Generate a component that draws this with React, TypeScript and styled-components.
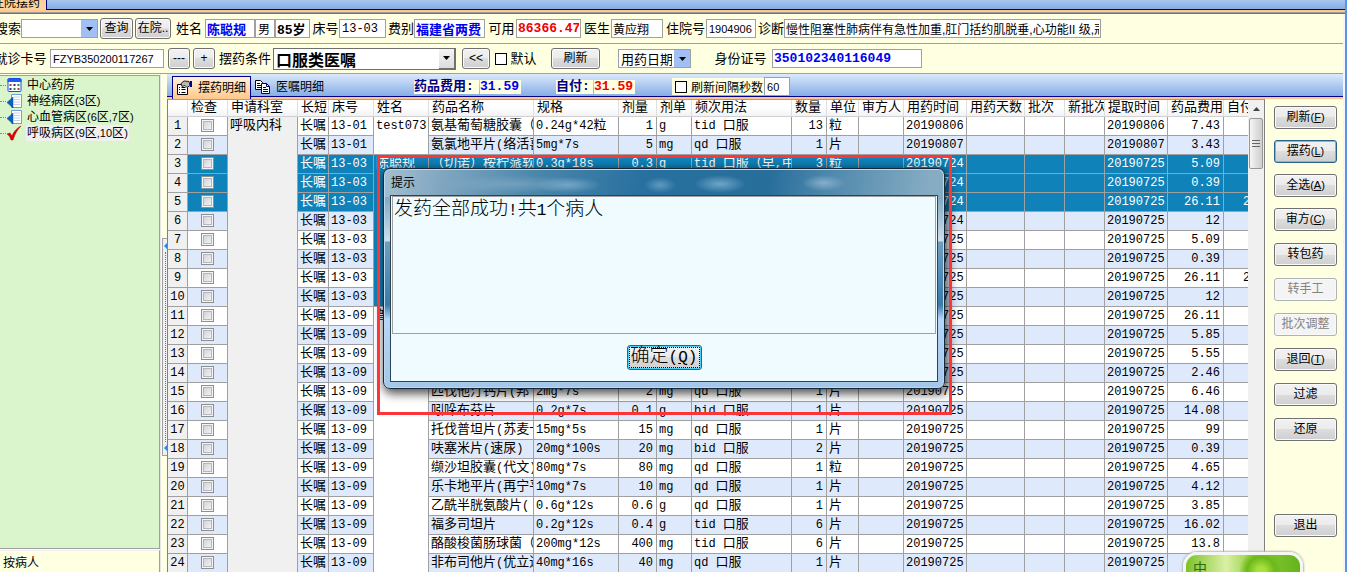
import React from "react";
import styled, { createGlobalStyle, css } from "styled-components";

const CJK = `"Noto Sans CJK SC", sans-serif`;
const MONO = `"Liberation Mono", ${CJK}`;
const UI = `"Liberation Sans", ${CJK}`;
const LINE = "#a0a0a0";
const CREAM = "#ffffe1";

const Global = createGlobalStyle`
  * { box-sizing: border-box; }
  body { margin: 0; overflow: hidden; font: 12px ${UI}; color: #000; }
  button, input, select { font: inherit; color: inherit; margin: 0; padding: 0; border-radius: 0; }
`;

/* ---------- text: Han characters and Latin runs have their own sizes ---------- */
const Han = styled.span<{ $s: number }>`
  font-family: ${CJK};
  font-size: ${(p) => p.$s}px;
  line-height: 0;
`;
const Latin = styled.span<{ $s: number }>`
  font-size: ${(p) => p.$s}px;
  line-height: 0;
`;
function Runs({ text, han = 13, latin = 12 }: { text: string; han?: number; latin?: number }) {
  const parts = text.match(/[\u0000-\u00ff]+|[^\u0000-\u00ff]+/g) || [];
  return (
    <>
      {parts.map((p, i) =>
        p.charCodeAt(0) < 256 ? <Latin key={i} $s={latin}>{p}</Latin> : <Han key={i} $s={han}>{p}</Han>
      )}
    </>
  );
}

/* ---------- frame ---------- */
const Window = styled.div`
  display: flex;
  flex-direction: column;
  height: 100vh;
  overflow: hidden;
  background: ${CREAM};
  border-right: 2px solid #5a92e6;
  position: relative;
`;
const TabStrip = styled.div`
  flex: none;
  display: flex;
  height: 14px;
  background: linear-gradient(#a8c6f0, #86ade6);
  background-size: 100% 9px;
  background-repeat: no-repeat;
  position: relative;
  border-bottom: 1px solid #707070;
  &::after {
    content: "";
    position: absolute;
    inset: 9px 0 0 0;
    border-top: 1px solid #00008b;
    background: linear-gradient(#ffc88a 2px, #a0a0a0 2px);
  }
`;
const PageTab = styled.button`
  width: 47px;
  height: 10px;
  overflow: hidden;
  border: 0;
  border-right: 1px solid #00008b;
  background: #ffd39c;
  display: flex;
  align-items: flex-end;
  justify-content: flex-end;
  padding-right: 6px;
  line-height: 14px;
  white-space: nowrap;
  z-index: 1;
`;
const Body = styled.div`
  flex: 1;
  min-height: 0;
  display: flex;
  flex-direction: column;
  border-right: 2px solid #f4f4fa;
`;
const Bar = styled.div`
  flex: none;
  height: 30px;
  display: flex;
  align-items: center;
  gap: 2px;
  white-space: nowrap;
  overflow: hidden;
  border-bottom: 1px solid ${LINE};
`;
const Group = styled.div<{ $lead?: number }>`
  display: flex;
  align-items: center;
  flex: none;
  margin-left: ${(p) => p.$lead || 0}px;
`;
const Label = styled.label<{ $w: number; $end?: boolean }>`
  width: ${(p) => p.$w}px;
  flex: none;
  display: flex;
  justify-content: ${(p) => (p.$end ? "flex-end" : "center")};
  overflow: hidden;
  font-size: 13px;
  line-height: 20px;
`;
const Box = styled.input<{ $w: number; $tone?: string; $bold?: boolean; $small?: boolean; $han?: boolean }>`
  width: ${(p) => p.$w}px;
  height: 19px;
  flex: none;
  border: 1px solid ${LINE};
  background: #fff;
  padding: 0 2px;
  color: ${(p) => p.$tone || "#000"};
  font: 12px/16px ${MONO};
  ${(p) => p.$bold && css`font-weight: 700; font-size: 13px; padding: 0 1px;`}
  ${(p) => p.$small && css`font: 11px/16px ${UI};`}
  ${(p) => p.$han && css`font: 12px/16px ${UI}; padding: 0 1px;`}
`;
const Btn = styled.button<{ $w?: number; $focus?: boolean }>`
  width: ${(p) => (p.$w ? `${p.$w}px` : "100%")};
  height: 21px;
  flex: none;
  border: 1px solid ${(p) => (p.$focus ? "#2c628b" : "#707070")};
  border-radius: 3px;
  background: linear-gradient(#f2f2f2, #ebebeb 50%, #dddddd 50%, #cfcfcf);
  box-shadow: inset 0 0 0 1px ${(p) => (p.$focus ? "#48d0f4" : "#fafafa")};
  line-height: 19px;
  white-space: nowrap;
  &:disabled {
    color: #838383;
    border-color: #adb2b5;
    background: #f4f4f4;
  }
`;
const Combo = styled.span<{ $w: number; $big?: boolean }>`
  width: ${(p) => p.$w}px;
  height: ${(p) => (p.$big ? 22 : 19)}px;
  flex: none;
  display: flex;
  border: 1px solid ${(p) => (p.$big ? "#707070" : LINE)};
  background: #fff;
  select {
    appearance: none;
    flex: 1;
    min-width: 0;
    border: 0;
    outline: 0;
    background: transparent;
    padding: 0 2px;
    font: ${(p) => (p.$big ? "700 16px/18px" : "13px/17px")} ${CJK};
  }
`;
const Drop = styled.span<{ $grey?: boolean }>`
  width: 16px;
  flex: none;
  display: grid;
  place-items: center;
  background: ${(p) => (p.$grey ? "linear-gradient(#f4f4f4, #dcdcdc)" : "#a0bff5")};
  ${(p) => p.$grey && css`border-right: 1px solid #707070; border-bottom: 1px solid #707070;`}
`;
const Tri = () => (
  <svg width="7" height="4" viewBox="0 0 7 4" aria-hidden="true">
    <path d="M0 0h7L3.500 4z" fill="#000" />
  </svg>
);
const Tick = styled.input`
  appearance: none;
  width: 12px;
  height: 12px;
  flex: none;
  border: 1px solid #000;
  background: #fff;
`;

/* ---------- left side ---------- */
const Work = styled.div`
  flex: 1;
  min-height: 0;
  display: flex;
`;
const Side = styled.aside`
  width: 161px;
  flex: none;
  display: flex;
  flex-direction: column;
  padding-top: 1px;
  border-right: 1px solid #e6e6e6;
`;
const Tree = styled.ul`
  flex: 1;
  margin: 0;
  padding: 1px 0 0;
  list-style: none;
  background: #daf5cc;
  border: 1px solid ${LINE};
  border-left: 0;
`;
const Node = styled.li<{ $on?: boolean }>`
  height: 16px;
  display: flex;
  align-items: center;
  line-height: 16px;
  white-space: nowrap;
  gap: 4px;
  &::before {
    content: "";
    width: 6px;
    margin-right: -3px;
    border-top: 1px dotted #888;
  }
  svg { flex: none; width: 15px; }
  span.name { padding: 0 1px; background: ${(p) => (p.$on ? "#f0f0f0" : "none")}; }
`;
const SideFoot = styled.div`
  height: 22px;
  flex: none;
  margin-top: 1px;
  border-top: 1px solid #f0f0f0;
  border-right: 1px solid ${LINE};
  padding-left: 3px;
  line-height: 25px;
`;
const Splitter = styled.div`
  width: 6px;
  flex: none;
  padding: 164px 0 0 1px;
`;
const Handle = styled.div`
  width: 5px;
  height: 218px;
  border: 1px solid ${LINE};
  border-right: 0;
  background: #f0f0f0;
  display: flex;
  flex-direction: column;
  align-items: center;
  justify-content: space-between;
  padding: 4px 0;
  &::before, &::after {
    content: "";
    border: 3px solid transparent;
    border-right-color: #1e8bef;
    border-left: 0;
  }
  i { flex: 1; margin: 3px 0; border-left: 1px dotted #1e8bef; }
`;

/* ---------- grid ---------- */
const Main = styled.main`
  flex: 1;
  min-width: 0;
  display: flex;
  flex-direction: column;
`;
const Strip = styled.div`
  flex: none;
  height: 25px;
  display: flex;
  align-items: center;
  background: linear-gradient(#dbe9fc, #86ade6 22px, #00008b 22px, #00008b 23px, #ffc88a 23px);
  white-space: nowrap;
`;
const SubTab = styled.button<{ $on?: boolean; $w: number }>`
  width: ${(p) => p.$w}px;
  height: 21px;
  flex: none;
  align-self: flex-end;
  display: flex;
  align-items: center;
  gap: 5px;
  border: 0;
  background: none;
  padding: 0 0 0 4px;
  margin: 0 0 2px;
  line-height: 22px;
  ${(p) =>
    p.$on &&
    css`
      border: 1px solid #00008b;
      border-bottom: 0;
      background: linear-gradient(#fff0dc, #ffc88a);
      margin: 0 0 0 5px;
      padding-left: 3px;
      height: 23px;
    `}
`;
const Sum = styled.span<{ $tone?: string; $w: number }>`
  width: ${(p) => p.$w}px;
  background: ${CREAM};
  color: ${(p) => p.$tone || "#00008b"};
  font: 700 13px/14px ${MONO};
  margin-right: 1px;
`;
const Refresh = styled.label`
  display: flex;
  align-items: center;
  gap: 4px;
  background: ${CREAM};
  height: 17px;
  padding: 0 1px 0 3px;
`;
const Content = styled.div`
  flex: 1;
  min-height: 0;
  display: flex;
`;
const GridWrap = styled.div`
  flex: 1;
  min-width: 0;
  display: flex;
  border: 1px solid #808080;
  border-top-color: ${LINE};
  border-bottom: 0;
  background: #f0f0f0;
`;
const Clip = styled.div`
  flex: 1;
  min-width: 0;
  overflow: hidden;
`;
const Grid = styled.table`
  table-layout: fixed;
  width: max(100%, 1115px);
  border-collapse: separate;
  border-spacing: 0;
  font: 12px/18px ${MONO};
  white-space: nowrap;
`;
const Th = styled.th`
  height: 17px;
  padding: 0 0 0 3px;
  overflow: hidden;
  text-align: left;
  font-weight: 400;
  line-height: 16px;
  border-right: 1px solid #e0e0e0;
  border-bottom: 1px solid #d0d0d0;
  background: linear-gradient(#fff 50%, #f2f2f4);
`;
const Td = styled.td<{ $align?: string; $fill?: string; $ink?: string }>`
  height: 19px;
  padding: 0 ${(p) => (p.$align === "right" ? 3 : 0)}px 0 ${(p) => (p.$align === "center" ? 0 : 2)}px;
  overflow: hidden;
  vertical-align: top;
  text-align: ${(p) => p.$align || "left"};
  border-right: 1px solid ${LINE};
  border-bottom: 1px solid ${LINE};
  background: ${(p) => p.$fill};
  color: ${(p) => p.$ink || "#000"};
`;
const CheckCell = styled.input`
  appearance: none;
  display: block;
  width: 13px;
  height: 13px;
  && { margin: 2px auto 0; }
  border: 1px solid #8e8f8f;
  background: linear-gradient(135deg, #c8ccd2, #fafafa);
  box-shadow: inset 0 0 0 1px #f4f4f4, inset 0 0 0 2px #b4b8be;
`;
const Scroll = styled.div`
  width: 16px;
  flex: none;
  display: flex;
  flex-direction: column;
  align-items: center;
  background: #f0f0f0;
  padding-top: 7px;
  gap: 7px;
`;
const Thumb = styled.div`
  width: 14px;
  height: 51px;
  border: 1px solid #979797;
  border-radius: 2px;
  background: linear-gradient(90deg, #f6f6f6, #e0e0e0 50%, #cfcfcf);
  display: grid;
  place-items: center;
`;
const Actions = styled.nav`
  width: 78px;
  flex: none;
  display: flex;
  flex-direction: column;
  gap: 12px;
  padding: 7px 6px 0 8px;
  border-left: 1px solid #fff;
  button { height: 23px; width: 63px; }
`;
const Tight = styled.div`
  display: flex;
  flex-direction: column;
  gap: 11px;
`;
const Exit = styled.div`
  margin-top: 61px;
`;

/* ---------- overlays ---------- */
const Mark = styled.div`
  position: absolute;
  left: 377px;
  top: 155px;
  width: 575px;
  height: 260px;
  border: 3px solid #fb3538;
  z-index: 3;
`;
const Dialog = styled.section`
  position: absolute;
  left: 383px;
  top: 168px;
  width: 562px;
  height: 221px;
  z-index: 2;
  display: flex;
  flex-direction: column;
  padding: 0 6px 6px;
  border: 1px solid #16293a;
  border-radius: 7px;
  box-shadow: inset 0 0 0 1px #bcd9ee, 2px 3px 10px 2px rgba(0, 0, 0, 0.65);
  background:
    radial-gradient(76px 9px at 130px 15px, #8db3cc80, transparent),
    radial-gradient(34px 8px at 184px 16px, #6fa3c4, transparent),
    radial-gradient(16px 8px at 276px 16px, #5f9abf, transparent),
    radial-gradient(26px 9px at 336px 15px, #6fa5c8, transparent),
    radial-gradient(22px 8px at 440px 14px, #86b0ca, transparent),
    linear-gradient(100deg, #a5bfd1 0, #7fa6c0 60px, #4b86ab 150px, #27709f 260px, #276e9b 380px, #4f88ac 440px, #86acc3 540px) 0 0 / 100% 28px no-repeat,
    linear-gradient(#7fa9c4 28px, #cfdeea 72px, #6f9fc0 73px, #3a7ca8 136px, #b5d5fb 150px, #a4c6e8 100%);
`;
const DialogTitle = styled.h2`
  margin: 0;
  height: 26px;
  flex: none;
  padding-left: 1px;
  font: 12px/26px ${CJK};
`;
const DialogBody = styled.div`
  flex: 1;
  display: flex;
  flex-direction: column;
  align-items: center;
  border: 1px solid #2b4355;
  background: #effbff;
  padding: 0 1px;
`;
const Message = styled.p`
  margin: 0;
  width: 100%;
  height: 138px;
  border: 1px solid ${LINE};
  padding: 0 1px;
  font: 300 19px/26px ${MONO};
`;
const Ok = styled.button`
  width: 75px;
  height: 25px;
  margin-top: 11px;
  border: 1px solid #2c628b;
  border-radius: 3px;
  background: linear-gradient(#f2f2f2, #ebebeb 50%, #dddddd 50%, #cfcfcf);
  box-shadow: inset 0 0 0 1px #48d0f4;
  outline: 1px dotted #000;
  outline-offset: -3px;
  font: 300 19px/21px ${MONO};
  white-space: nowrap;
`;
const Ime = styled.div`
  position: absolute;
  right: 42px;
  bottom: -14px;
  width: 120px;
  height: 34px;
  z-index: 4;
  border: 3px solid #f4f6f4;
  border-radius: 14px;
  box-shadow: 0 0 2px 1px #b8b8b8;
  padding: 3px 0 0 7px;
  color: #2f6b10;
  font: 14px/18px ${CJK};
  background:
    radial-gradient(circle at 75px 16px, #a6e03a 4px, #6cb81a 14px, transparent 22px),
    linear-gradient(90deg, #7cc22a, #d9f0a4 35%, #8fce3c 60%, #63b41c);
`;

/* ---------- icons ---------- */
const Calendar = () => (
  <svg width="14" height="14" viewBox="0 0 14 14">
    <rect x="0.500" y="0.500" width="13" height="13" rx="1" fill="#fff" stroke="#1450e6" />
    <path d="M0 1h14v3H0z" fill="#1e5cf0" />
    <path d="M2 6h2v2H2zM10 10h2v2h-2z" fill="#b04030" />
    <path d="M6 6h2v2H6zM2 10h2v2H2z" fill="#402a90" />
    <path d="M10 6h2v2h-2zM6 10h2v2H6z" fill="#2a8a50" />
  </svg>
);
const Ward = () => (
  <svg width="15" height="16" viewBox="0 0 15 16">
    <path d="M4.500 1.500h10v13h-10z" fill="#fff" stroke="#6f9fd8" />
    <path d="M7 4h6M7 6.500h6M7 9h6M7 11.500h6" stroke="#c3d2e2" />
    <path d="M0 9.500 6 4v11z" fill="#0a5fc8" stroke="#0a3f90" strokeWidth=".5" />
  </svg>
);
const Check = () => (
  <svg width="15" height="16" viewBox="0 0 15 16">
    <path d="M0 9l3-1 2 3C7 6 10 3 14 1 10 5 8 9 6 15H4C3 12 2 10 0 9z" fill="#e80000" stroke="#900" strokeWidth=".5" />
  </svg>
);
const FormIcon = () => (
  <svg width="17" height="16" viewBox="0 0 17 16">
    <path d="M1.500 4.500h10v10h-10z" fill="#fff" stroke="#000" />
    <path d="M3 7.500h1M5.500 7.500h4M3 9.500h1M5.500 9.500h4M3 12.500h1M5.500 12.500h4" stroke="#000" />
    <path d="M5 3.500 8 1l5 .5 1 4-3 2-2-2-3 1z" fill="#b9b9b9" stroke="#222" />
    <path d="M14 1h2v6h-2z" fill="#00008b" />
  </svg>
);
const CopyIcon = () => (
  <svg width="16" height="14" viewBox="0 0 16 14">
    <path d="M.5.500h5l2 2v7h-7z" fill="#fff" stroke="#000" />
    <path d="M2 3.500h3M2 5.500h4M2 7.500h4" stroke="#000" />
    <path d="M6.500 3.500h5l3 3v7h-8z" fill="#fff" stroke="#00006b" />
    <path d="M11.500 3.500v3h3M8 7.500h3M8 9.500h5M8 11.500h5" stroke="#00006b" fill="none" />
  </svg>
);

/* ---------- data ---------- */
const cols: [string, number | undefined][] = [
  ["", 20], ["检查", 40], ["申请科室", 70], ["长短", 31], ["床号", 45], ["姓名", 55], ["药品名称", 105],
  ["规格", 85], ["剂量", 38], ["剂单", 35], ["频次用法", 100], ["数量", 35], ["单位", 32], ["审方人", 45],
  ["用药时间", 63], ["用药天数", 58], ["批次", 40], ["新批次", 40], ["提取时间", 63], ["药品费用", 56], ["自付", undefined],
];
// bed, drug, spec, dose, dose unit, usage, quantity, unit, use date, fetch date, fee, self-paid
const rows: string[][] = [
  ["13-01", "氨基葡萄糖胶囊（", "0.24g*42粒", "1", "g", "tid 口服", "13", "粒", "20190806", "20190806", "7.43", ""],
  ["13-01", "氨氯地平片(络活喜", "5mg*7s", "5", "mg", "qd 口服", "1", "片", "20190807", "20190807", "3.43", ""],
  ["13-03", "（切诺）桉柠蒎软", "0.3g*18s", "0.3", "g", "tid 口服（早,中", "3", "粒", "20190724", "20190725", "5.09", ""],
  ["13-03", "", "", "", "", "", "", "", "20190724", "20190725", "0.39", ""],
  ["13-03", "", "", "", "", "", "", "", "20190724", "20190725", "26.11", "26.11"],
  ["13-03", "", "", "", "", "", "", "", "20190724", "20190725", "12", ""],
  ["13-03", "", "", "", "", "", "", "", "20190725", "20190725", "5.09", ""],
  ["13-03", "", "", "", "", "", "", "", "20190725", "20190725", "0.39", ""],
  ["13-03", "", "", "", "", "", "", "", "20190725", "20190725", "26.11", "26.11"],
  ["13-03", "", "", "", "", "", "", "", "20190725", "20190725", "12", ""],
  ["13-09", "", "", "", "", "", "", "", "20190725", "20190725", "26.11", ""],
  ["13-09", "", "", "", "", "", "", "", "20190725", "20190725", "5.85", ""],
  ["13-09", "", "", "", "", "", "", "", "20190725", "20190725", "5.55", ""],
  ["13-09", "", "", "", "", "", "", "", "20190725", "20190725", "2.46", ""],
  ["13-09", "匹伐他汀钙片(邦", "2mg*7s", "2", "mg", "qd 口服", "1", "片", "20190725", "20190725", "6.46", ""],
  ["13-09", "吲哚布芬片", "0.2g*7s", "0.1", "g", "bid 口服", "1", "片", "20190725", "20190725", "14.08", ""],
  ["13-09", "托伐普坦片(苏麦卡", "15mg*5s", "15", "mg", "qd 口服", "1", "片", "20190725", "20190725", "99", ""],
  ["13-09", "呋塞米片(速尿)", "20mg*100s", "20", "mg", "bid 口服", "2", "片", "20190725", "20190725", "0.39", ""],
  ["13-09", "缬沙坦胶囊(代文)", "80mg*7s", "80", "mg", "qd 口服", "1", "粒", "20190725", "20190725", "4.65", ""],
  ["13-09", "乐卡地平片(再宁平", "10mg*7s", "10", "mg", "qd 口服", "1", "片", "20190725", "20190725", "4.12", ""],
  ["13-09", "乙酰半胱氨酸片(", "0.6g*12s", "0.6", "g", "qd 口服", "1", "片", "20190725", "20190725", "3.85", ""],
  ["13-09", "福多司坦片", "0.2g*12s", "0.4", "g", "tid 口服", "6", "片", "20190725", "20190725", "16.02", ""],
  ["13-09", "酪酸梭菌肠球菌（", "200mg*12s", "400", "mg", "tid 口服", "6", "片", "20190725", "20190725", "13.8", ""],
  ["13-09", "非布司他片(优立通", "40mg*16s", "40", "mg", "qd 口服", "1", "片", "20190725", "20190725", "", ""],
];
const patients: Record<number, [string, number]> = { 0: ["test073", 2], 2: ["陈聪规", 8], 10: ["曾", 14] };

function Row({ r, i }: { r: string[]; i: number }) {
  const on = i >= 2 && i <= 4;
  const fill = on ? "#0f82b9" : i % 2 ? "#deeafc" : "#fff";
  const ink = on ? "#fff" : "#000";
  const cell = (v: string, key: string, align?: string) => (
    <Td key={key} $fill={fill} $ink={ink} $align={align}><Runs text={v} /></Td>
  );
  const p = patients[i];
  const teal = i === 2;
  return (
    <tr>
      <Td $align="center" $fill="#f0f0f0">{i + 1}</Td>
      <Td $align="center" $fill={fill}>
        <CheckCell type="checkbox" aria-label={`选择第${i + 1}行`} />
      </Td>
      {i === 0 && <Td rowSpan={24} $fill="#f0f0f0"><Runs text="呼吸内科" /></Td>}
      {cell("长嘱", "t")}
      {cell(r[0], "bed")}
      {p && (
        <Td rowSpan={p[1]} $fill={teal ? "#0f82b9" : "#fff"} $ink={teal ? "#fff" : "#000"}>
          <Runs text={p[0]} />
        </Td>
      )}
      {cell(r[1], "drug")}
      {cell(r[2], "spec")}
      {cell(r[3], "dose", "right")}
      {cell(r[4], "du")}
      {cell(r[5], "use")}
      {cell(r[6], "q", "right")}
      {cell(r[7], "u")}
      {cell("", "rev")}
      {cell(r[8], "d1")}
      {cell("", "days")}
      {cell("", "b")}
      {cell("", "nb")}
      {cell(r[9], "d2")}
      {cell(r[10], "fee", "right")}
      {cell(r[11], "self", "right")}
    </tr>
  );
}

const Key = ({ t, k }: { t: string; k: string }) => (
  <>{t}<Latin $s={11}>(<u>{k}</u>)</Latin></>
);

export default function App() {
  return (
    <>
      <Global />
      <Window>
        <TabStrip><PageTab>住院摆药</PageTab></TabStrip>
        <Body>
          <Bar>
            <Group>
              <Label $w={21} $end htmlFor="find">搜索</Label>
              <Combo $w={77}><select id="find"><option></option></select><Drop><Tri /></Drop></Combo>
            </Group>
            <Btn $w={33}>查询</Btn>
            <Btn $w={36}>在院..</Btn>
            <Group>
              <Label $w={32} htmlFor="name">姓名</Label>
              <Box id="name" $w={50} $bold $tone="#0000f0" defaultValue="陈聪规" />
              <Box aria-label="性别" $w={20} defaultValue="男" />
              <Box aria-label="年龄" $w={35} $bold defaultValue="85岁" />
            </Group>
            <Group><Label $w={27} htmlFor="bed">床号</Label><Box id="bed" $w={47} defaultValue="13-03" /></Group>
            <Group><Label $w={26} htmlFor="kind">费别</Label><Box id="kind" $w={71} $bold $tone="#0000f0" defaultValue="福建省两费" /></Group>
            <Group><Label $w={29} htmlFor="left">可用</Label><Box id="left" $w={65} $bold $tone="#f00000" defaultValue="86366.47" /></Group>
            <Group><Label $w={28} htmlFor="doc">医生</Label><Box id="doc" $w={52} $han defaultValue="黄应翔" /></Group>
            <Group><Label $w={41} htmlFor="adm">住院号</Label><Box id="adm" $w={50} $small defaultValue="1904906" /></Group>
            <Group><Label $w={26} htmlFor="diag">诊断</Label><Box id="diag" $w={317} $han defaultValue="慢性阻塞性肺病伴有急性加重,肛门括约肌脱垂,心功能II 级,冠心病" /></Group>
          </Bar>
          <Bar>
            <Group>
              <Label $w={50} $end htmlFor="card">就诊卡号&nbsp;</Label>
              <Box id="card" $w={114} $small defaultValue="FZYB350200117267" />
            </Group>
            <Group $lead={2}><Btn $w={22}>---</Btn></Group>
            <Group $lead={1}><Btn $w={22}>+</Btn></Group>
            <Group>
              <Label $w={56} htmlFor="cond">摆药条件</Label>
              <Combo $w={183} $big><select id="cond"><option>口服类医嘱</option></select><Drop $grey><Tri /></Drop></Combo>
            </Group>
            <Group $lead={4}><Btn $w={28}>&lt;&lt;</Btn></Group>
            <Group $lead={3}><Tick type="checkbox" id="def" /><Label $w={33} htmlFor="def">默认</Label></Group>
            <Group $lead={9}><Btn $w={49}>刷新</Btn></Group>
            <Group $lead={16}>
              <Combo $w={73}><select aria-label="日期类型"><option>用药日期</option></select><Drop><Tri /></Drop></Combo>
            </Group>
            <Group $lead={16}>
              <Label $w={63} htmlFor="idno">身份证号</Label>
              <Box id="idno" $w={150} $bold $tone="#0000f0" defaultValue="350102340116049" />
            </Group>
          </Bar>
          <Work>
            <Side>
              <Tree>
                <Node><Calendar /><span className="name">中心药房</span></Node>
                <Node><Ward /><span className="name"><Runs text="神经病区(3区)" han={12} latin={11} /></span></Node>
                <Node><Ward /><span className="name"><Runs text="心血管病区(6区,7区)" han={12} latin={11} /></span></Node>
                <Node $on><Check /><span className="name"><Runs text="呼吸病区(9区,10区)" han={12} latin={11} /></span></Node>
              </Tree>
              <SideFoot>按病人</SideFoot>
            </Side>
            <Splitter><Handle><i /></Handle></Splitter>
            <Main>
              <Strip>
                <SubTab $on $w={79}><FormIcon />摆药明细</SubTab>
                <SubTab $w={76}><CopyIcon />医嘱明细</SubTab>
                <Group $lead={87}>
                  <Sum $w={65}>药品费用:</Sum><Sum $w={41} $tone="#0000f0">31.59</Sum>
                </Group>
                <Group $lead={34}>
                  <Sum $w={37}>自付:</Sum><Sum $w={41} $tone="#f00000">31.59</Sum>
                </Group>
                <Group $lead={36}>
                  <Refresh><Tick type="checkbox" />刷新间隔秒数</Refresh>
                  <Box aria-label="秒数" $w={26} $small defaultValue="60" />
                </Group>
              </Strip>
              <Content>
                <GridWrap>
                  <Clip>
                    <Grid>
                      <colgroup>{cols.map(([, w], i) => <col key={i} width={w} />)}</colgroup>
                      <thead><tr>{cols.map(([t], i) => <Th key={i}><Han $s={13}>{t}</Han></Th>)}</tr></thead>
                      <tbody>{rows.map((r, i) => <Row key={i} r={r} i={i} />)}</tbody>
                    </Grid>
                  </Clip>
                  <Scroll>
                    <svg width="7" height="4" viewBox="0 0 7 4"><path d="M0 4 3.500 0 7 4z" fill="#444" /></svg>
                    <Thumb>
                      <svg width="8" height="8" viewBox="0 0 8 8"><path d="M0 .5h8M0 3.500h8M0 6.500h8" stroke="#666" /></svg>
                    </Thumb>
                  </Scroll>
                </GridWrap>
                <Actions>
                  <Tight>
                    <Btn><Key t="刷新" k="F" /></Btn>
                    <Btn $focus><Key t="摆药" k="L" /></Btn>
                    <Btn><Key t="全选" k="A" /></Btn>
                    <Btn><Key t="审方" k="C" /></Btn>
                  </Tight>
                  <Btn>转包药</Btn>
                  <Btn disabled>转手工</Btn>
                  <Btn disabled>批次调整</Btn>
                  <Btn><Key t="退回" k="T" /></Btn>
                  <Btn>过滤</Btn>
                  <Btn>还原</Btn>
                  <Exit><Btn>退出</Btn></Exit>
                </Actions>
              </Content>
            </Main>
          </Work>
        </Body>
        <Dialog role="dialog" aria-labelledby="tip">
          <DialogTitle id="tip">提示</DialogTitle>
          <DialogBody>
            <Message><Runs text="发药全部成功!共1个病人" han={19} latin={16} /></Message>
            <Ok><Han $s={19}>确定</Han><Latin $s={16}>(<u>Q</u>)</Latin></Ok>
          </DialogBody>
        </Dialog>
        <Mark />
        <Ime>中</Ime>
      </Window>
    </>
  );
}
